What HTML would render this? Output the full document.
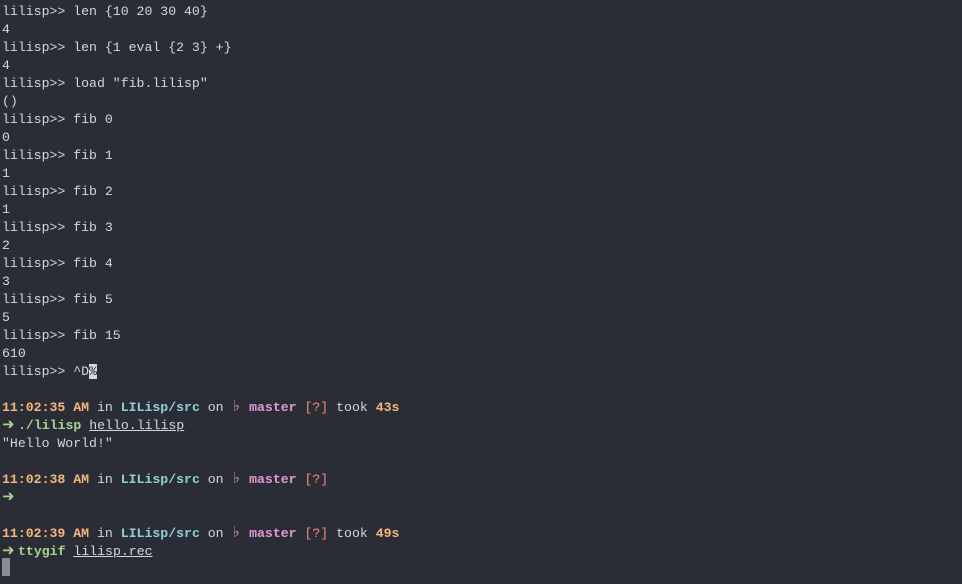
<!DOCTYPE html>
<html><head><style>
html,body{margin:0;padding:0;background:#2b2d36;width:962px;height:584px;overflow:hidden}
pre{margin:0;padding:3px 0 0 2px;font-family:"Liberation Mono",monospace;font-size:13.2px;line-height:18px;color:#d6d7da;white-space:pre}
.t{color:#f3b77f;font-weight:bold}
.c{color:#8ed0d6;font-weight:bold}
.m{color:#e09bd6;font-weight:bold}
.b{color:#e09bd6;font-size:16px;line-height:10px}
.q{color:#ee8a7b}
.g{color:#a8d38c;font-weight:bold}
.a{color:#a8d38c;font-size:15px;line-height:10px;font-family:"DejaVu Sans",sans-serif;display:inline-block;width:16px}
.u{text-decoration:underline}
.inv{background:#d6d7da;color:#2b2d36}
.cur{display:inline-block;width:8px;height:18px;background:#8a8c92;vertical-align:top;margin-top:-3px}
</style></head><body><pre>lilisp&gt;&gt; len {10 20 30 40}
4
lilisp&gt;&gt; len {1 eval {2 3} +}
4
lilisp&gt;&gt; load "fib.lilisp"
()
lilisp&gt;&gt; fib 0
0
lilisp&gt;&gt; fib 1
1
lilisp&gt;&gt; fib 2
1
lilisp&gt;&gt; fib 3
2
lilisp&gt;&gt; fib 4
3
lilisp&gt;&gt; fib 5
5
lilisp&gt;&gt; fib 15
610
lilisp&gt;&gt; ^D<span class="inv">%</span>

<span class="t">11:02:35 AM</span> in <span class="c">LILisp/src</span> on <span class="b">♭</span> <span class="m">master</span> <span class="q">[?]</span> took <span class="t">43s</span>
<span class="a">➜</span><span class="g">./lilisp</span> <span class="u">hello.lilisp</span>
"Hello World!"

<span class="t">11:02:38 AM</span> in <span class="c">LILisp/src</span> on <span class="b">♭</span> <span class="m">master</span> <span class="q">[?]</span>
<span class="a">➜</span>

<span class="t">11:02:39 AM</span> in <span class="c">LILisp/src</span> on <span class="b">♭</span> <span class="m">master</span> <span class="q">[?]</span> took <span class="t">49s</span>
<span class="a">➜</span><span class="g">ttygif</span> <span class="u">lilisp.rec</span>
<span class="cur"></span></pre></body></html>
